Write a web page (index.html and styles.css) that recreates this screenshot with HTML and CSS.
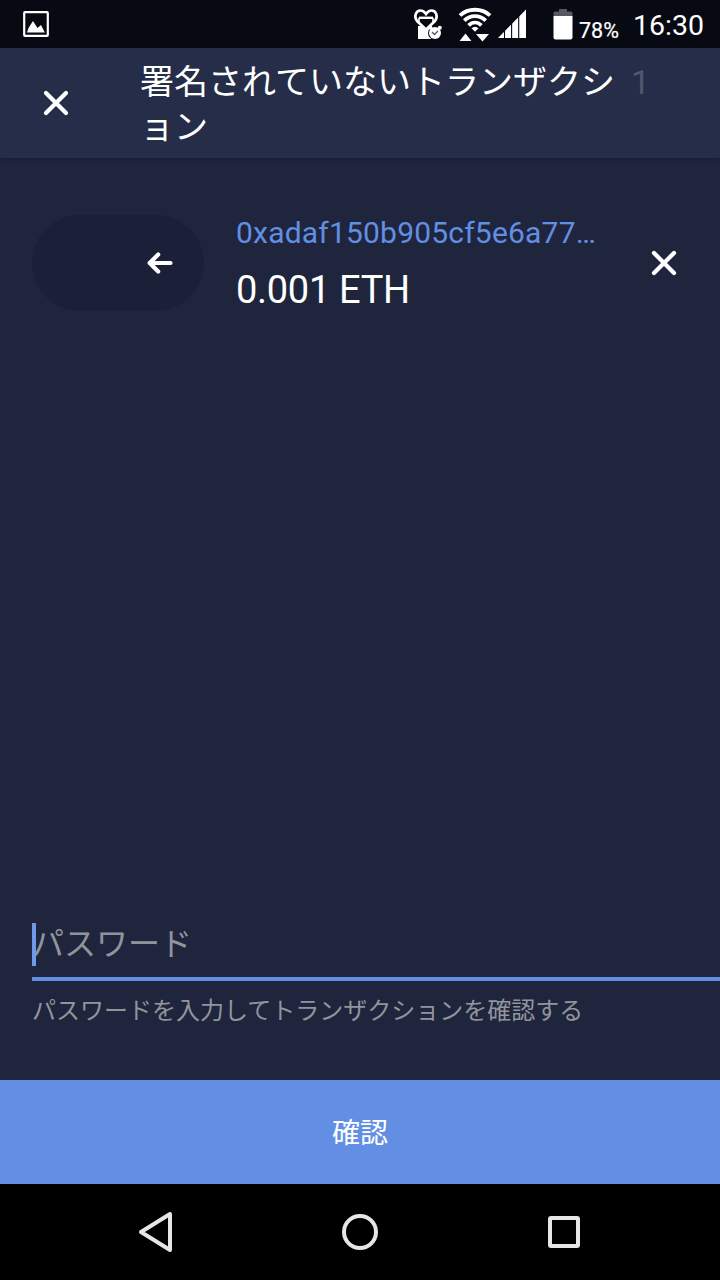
FILE: index.html
```html
<!DOCTYPE html>
<html lang="ja">
<head>
    <meta charset="UTF-8">
    <meta name="viewport" content="width=device-width, initial-scale=1.0">
    <title>署名されていないトランザクション</title>
    <link rel="stylesheet" href="styles.css">
</head>
<body>
    <!-- Status bar -->
    <div class="status-bar">
        <svg class="icon-image" width="28" height="28" viewBox="0 0 28 28">
            <rect x="2.2" y="2.2" width="23.6" height="23.6" rx="0.8" fill="none" stroke="#fff" stroke-width="2.2"/>
            <path d="M5 22.5L6.5 18L11 11L15.5 18L19 15L22.8 22.5Z" fill="#fff"/>
        </svg>
        <div class="status-right">
            <svg class="icon-heart" width="32" height="34" viewBox="0 0 32 34">
                <path d="M6 19H20V32H6Z" fill="#fff"/>
                <path d="M14 22.5L5 14C1.5 9.5 4 3.5 8.5 3.5C11.5 3.5 13 5.5 14 7C15 5.5 16.5 3.5 19.5 3.5C24 3.5 26.5 9.5 23 14Z" fill="#070a12" stroke="#fff" stroke-width="2.6"/>
                <path d="M7 10.8H21" fill="none" stroke="#fff" stroke-width="2.4"/>
                <path d="M7 10.8V15M21 10.8V15" fill="none" stroke="#fff" stroke-width="1.6"/>
                <circle cx="23" cy="26" r="7" fill="#070a12"/>
                <circle cx="23" cy="26" r="6" fill="#fff"/>
                <circle cx="18.5" cy="20.8" r="2" fill="#fff"/>
                <circle cx="27.8" cy="20.8" r="2" fill="#fff"/>
                <path d="M20 25L22.5 27.5L26 24" fill="none" stroke="#555b64" stroke-width="1.4"/>
            </svg>
            <svg class="icon-wifi" width="34" height="36" viewBox="0 0 34 36">
                <g fill="none" stroke="#fff" stroke-width="3.8">
                    <path d="M2 9.5C10 1.8 24 1.8 32 9.5"/>
                    <path d="M6.3 14.6C12.5 8.6 21.5 8.6 27.7 14.6"/>
                    <path d="M10.6 19.4C14.5 15.6 19.5 15.6 23.4 19.4"/>
                </g>
                <path d="M13.5 22.2Q17 19.2 20.5 22.2L17 25.7Z" fill="#fff"/>
                <path d="M1.5 35L7.5 27.5L13.4 35Z" fill="#fff"/>
                <path d="M18 28H31L24.5 35.5Z" fill="#fff"/>
            </svg>
            <svg class="icon-signal" width="30" height="30" viewBox="0 0 30 30">
                <path d="M0 29L28 0.5V29Z" fill="#fff"/>
                <path d="M6.5 18V29M13.6 10V29M20.7 4V29" stroke="#070a12" stroke-width="1.1"/>
            </svg>
            <svg class="icon-battery" width="20" height="32" viewBox="0 0 20 32">
                <path d="M6 1H14V3.5H18Q19.5 3.5 19.5 5V9H0.5V5Q0.5 3.5 2 3.5H6Z" fill="#57595f"/>
                <path d="M0.5 8H19.5V29.5Q19.5 31.5 17.5 31.5H2.5Q0.5 31.5 0.5 29.5Z" fill="#fff"/>
            </svg>
            <span class="battery-level">78%</span>
            <span class="clock">16:30</span>
        </div>
    </div>

    <!-- Header -->
    <header class="header">
        <button class="icon-button" aria-label="閉じる">
            <svg width="26" height="26" viewBox="0 0 26 26">
                <path d="M3 3L23 23M23 3L3 23" class="stroke-icon"/>
            </svg>
        </button>
        <h1 class="title">署名されていないトランザクション</h1>
        <span class="count">1</span>
    </header>

    <main class="content">
        <!-- Transaction -->
        <div class="transaction">
            <div class="direction">
                <svg width="26" height="22" viewBox="0 0 26 22">
                    <path d="M2.5 11H23.5M11.2 2.5L2.7 11L11.2 19.5" class="stroke-icon"/>
                </svg>
            </div>
            <div class="details">
                <a class="address">0xadaf150b905cf5e6a77…</a>
                <p class="amount">0.001 ETH</p>
            </div>
            <button class="icon-button" aria-label="削除">
                <svg width="26" height="26" viewBox="0 0 26 26">
                    <path d="M3 3L23 23M23 3L3 23" class="stroke-icon"/>
                </svg>
            </button>
        </div>

        <!-- Password -->
        <div class="password">
            <span class="caret"></span>
            <input class="password-input" id="password" type="password" placeholder="パスワード">
            <label class="password-help" for="password">パスワードを入力してトランザクションを確認する</label>
        </div>
    </main>

    <button class="confirm">確認</button>

    <!-- Navigation bar -->
    <nav class="nav-bar">
        <svg width="40" height="44" viewBox="0 0 40 44">
            <path d="M34 4V40L5 22Z"/>
        </svg>
        <svg width="40" height="44" viewBox="0 0 40 44">
            <circle cx="20" cy="22" r="16"/>
        </svg>
        <svg width="40" height="44" viewBox="0 0 40 44">
            <rect x="6" y="8" width="28" height="28" rx="1"/>
        </svg>
    </nav>
</body>
</html>
```
FILE: styles.css
```css
* {
    box-sizing: border-box;
}

body {
    margin: 0;
    height: 1280px;
    display: flex;
    flex-direction: column;
    overflow: hidden;
    background-color: #20253e;
    color: #fff;
    font-family: Roboto, "Noto Sans CJK JP", sans-serif;
}

button {
    border: none;
    padding: 0;
    background: none;
    color: inherit;
    font-family: inherit;
    cursor: pointer;
}

svg {
    display: block;
    flex-shrink: 0;
}

.stroke-icon {
    fill: none;
    stroke: #fff;
    stroke-width: 4.2;
    stroke-linecap: round;
    stroke-linejoin: round;
}

/* Status bar */
.status-bar {
    height: 48px;
    flex-shrink: 0;
    display: flex;
    justify-content: space-between;
    align-items: center;
    padding: 0 16px 0 22px;
    background-color: #070a12;
}

.status-right {
    display: flex;
    align-items: center;
}

.icon-wifi {
    margin-left: 14px;
}

.icon-signal {
    margin-left: 6px;
}

.icon-battery {
    margin-left: 25px;
}

.battery-level {
    width: 41px;
    margin: 13px 0 0 6px;
    font-size: 21.5px;
    line-height: 24px;
    -webkit-text-stroke: 0.2px #fff;
}

.clock {
    width: 71px;
    margin: 3px 0 0 13px;
    font-size: 28.5px;
    line-height: 34px;
}

/* Header */
.header {
    height: 110px;
    flex-shrink: 0;
    display: flex;
    background-color: #252d49;
    box-shadow: 0 1px 4px rgba(0, 0, 0, 0.3);
}

.icon-button {
    width: 112px;
    display: flex;
    align-items: center;
    justify-content: center;
    flex-shrink: 0;
}

.title {
    width: 476px;
    margin: 12px 0 0 28px;
    font-size: 34px;
    font-weight: 400;
    line-height: 45px;
    word-break: break-all;
    line-break: anywhere;
}

.count {
    margin: 11px 0 0 15px;
    font-size: 34px;
    line-height: 46px;
    color: #51576f;
}

.content {
    flex: 1;
    display: flex;
    flex-direction: column;
    justify-content: space-between;
}

/* Transaction */
.transaction {
    display: flex;
    height: 96px;
    margin: 57px 0 0 32px;
}

.direction {
    width: 172px;
    padding-right: 31px;
    display: flex;
    align-items: center;
    justify-content: flex-end;
    border-radius: 48px;
    background-color: #1b1f37;
}

.details {
    width: 372px;
    margin-left: 32px;
}

.address {
    display: block;
    font-size: 30px;
    line-height: 36px;
    letter-spacing: 0.2px;
    color: #608fe4;
}

.amount {
    margin: 17px 0 0;
    font-size: 38px;
    line-height: 44px;
    letter-spacing: -0.3px;
}

/* Password */
.password {
    position: relative;
    margin: 0 0 51px 32px;
}

.caret {
    position: absolute;
    top: 0;
    left: 0;
    width: 4px;
    height: 43px;
    background-color: #709ae9;
}

.password-input {
    display: block;
    width: 100%;
    height: 58px;
    padding: 0 0 13px;
    border: none;
    border-bottom: 4px solid #628fe3;
    border-radius: 0;
    outline: none;
    background: none;
    color: #fff;
    font-family: inherit;
    font-size: 32px;
}

.password-input::placeholder {
    color: #90959c;
}

.password-help {
    display: block;
    margin-top: 12px;
    font-size: 24px;
    line-height: 36px;
    color: #90959c;
}

.confirm {
    height: 104px;
    flex-shrink: 0;
    padding-bottom: 2px;
    background-color: #628fe3;
    font-size: 28px;
}

/* Navigation bar */
.nav-bar {
    height: 96px;
    flex-shrink: 0;
    display: flex;
    align-items: center;
    justify-content: space-between;
    padding: 0 136px;
    background-color: #000;
}

.nav-bar svg {
    fill: none;
    stroke: #e6e6e6;
    stroke-width: 4;
    stroke-linejoin: round;
}
```
